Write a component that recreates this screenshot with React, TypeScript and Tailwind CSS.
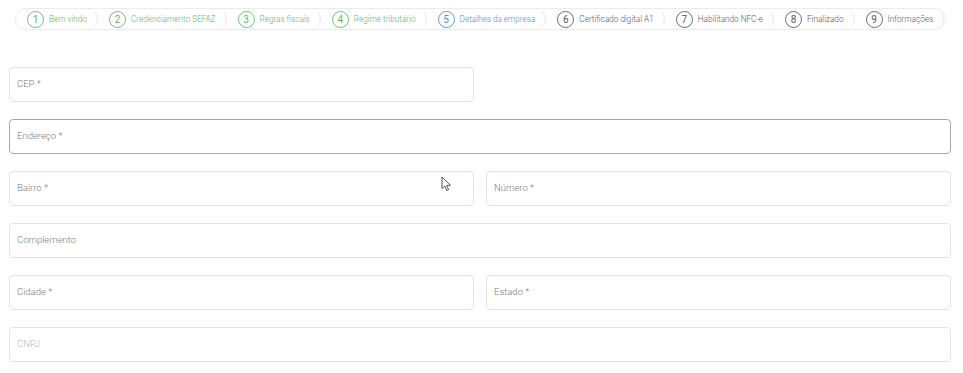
import React from "react";

type Step = { n: number; label: string; state: "done" | "active" | "todo" };

const steps: Step[] = [
  { n: 1, label: "Bem vindo", state: "done" },
  { n: 2, label: "Credenciamento SEFAZ", state: "done" },
  { n: 3, label: "Regras fiscais", state: "done" },
  { n: 4, label: "Regime tributário", state: "done" },
  { n: 5, label: "Detalhes da empresa", state: "active" },
  { n: 6, label: "Certificado digital A1", state: "todo" },
  { n: 7, label: "Habilitando NFC-e", state: "todo" },
  { n: 8, label: "Finalizado", state: "todo" },
  { n: 9, label: "Informações", state: "todo" },
];

const stepColor = {
  done: "text-[#5cb85f] border-[#6cc06f]",
  active: "text-[#4d8fd1] border-[#5a97d4]",
  todo: "text-[#5a5a5a] border-[#6a6a6a]",
};

function Field({
  label,
  focused,
  disabled,
}: {
  label: string;
  focused?: boolean;
  disabled?: boolean;
}) {
  return (
    <div
      className={`h-[35px] rounded-[4px] border flex items-center px-[7px] bg-white ${
        focused ? "border-[#a8a8a8]" : "border-[#e3e3e3]"
      }`}
    >
      <span
        className={`text-[9.5px] font-light ${
          disabled ? "text-[#b8b8b8]" : "text-[#7a7a7a]"
        }`}
      >
        {label}
      </span>
    </div>
  );
}

function Cursor() {
  return (
    <svg
      className="absolute left-[441px] top-[176px]"
      width="12"
      height="16"
      viewBox="0 0 12 16"
    >
      <path
        d="M1 1 L1 12.5 L3.8 10 L5.8 14.5 L7.6 13.7 L5.7 9.4 L9.5 9.2 Z"
        fill="white"
        stroke="#444"
        strokeWidth="0.9"
        strokeLinejoin="round"
      />
    </svg>
  );
}

export default function App() {
  return (
    <div
      className="relative w-[963px] h-[373px] bg-white overflow-hidden"
      style={{ fontFamily: "Roboto, 'Liberation Sans', sans-serif" }}
    >
      <div className="pt-[8px] pl-[15px] pr-[17px]">
        <div className="flex h-[22px] rounded-full border border-[#ececec] overflow-hidden">
          {steps.map((s) => (
            <div
              key={s.n}
              className="flex items-center gap-[5px] pl-[11px] pr-[10px] rounded-r-full border-r border-[#e6e6e6] whitespace-nowrap"
            >
              <span
                className={`w-[17px] h-[17px] shrink-0 rounded-full border flex items-center justify-center text-[10px] ${stepColor[s.state]}`}
              >
                {s.n}
              </span>
              <span className={`text-[8.2px] font-light ${stepColor[s.state]}`}>
                {s.label}
              </span>
            </div>
          ))}
        </div>
      </div>

      <div className="pl-[9px] pr-[12px] pt-[37px] flex flex-col gap-[17px]">
        <div className="grid grid-cols-2 gap-[12px]">
          <Field label="CEP *" />
          <div />
        </div>
        <Field label="Endereço *" focused />
        <div className="grid grid-cols-2 gap-[12px]">
          <Field label="Bairro *" />
          <Field label="Número *" />
        </div>
        <Field label="Complemento" />
        <div className="grid grid-cols-2 gap-[12px]">
          <Field label="Cidade *" />
          <Field label="Estado *" />
        </div>
        <Field label="CNPJ" disabled />
      </div>

      <Cursor />
    </div>
  );
}
